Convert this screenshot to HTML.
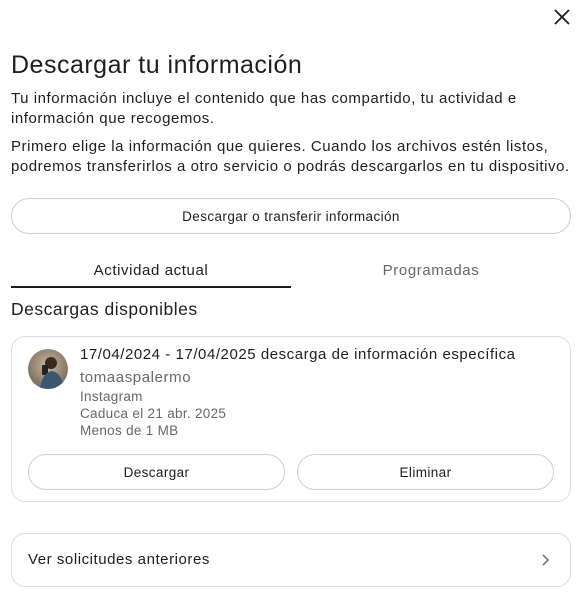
<!DOCTYPE html>
<html><head><meta charset="utf-8"><style>
*{margin:0;padding:0;box-sizing:border-box}
body{width:576px;height:593px;background:#fff;font-family:"Liberation Sans",sans-serif;color:#1c1e21;position:relative;overflow:hidden}
.a{position:absolute;white-space:nowrap}
.btn{position:absolute;border:1px solid #ced0d4;border-radius:20px;display:flex;align-items:center;justify-content:center;font-size:13.5px;letter-spacing:0.4px;color:#1c1e21}
.p{font-size:15px;letter-spacing:0.55px;line-height:20px;left:11px}
.g{color:#65676b}
</style></head><body>
<svg class="a" style="left:553px;top:8px" width="18" height="18" viewBox="0 0 18 18"><path d="M2 2L16 16M16 2L2 16" stroke="#1c1e21" stroke-width="1.8"/></svg>
<div class="a" style="left:11px;top:51px;font-size:25px;letter-spacing:0.5px;font-weight:500">Descargar tu información</div>
<div class="a p" style="top:89px">Tu información incluye el contenido que has compartido, tu actividad e<br>información que recogemos.</div>
<div class="a p" style="top:137px">Primero elige la información que quieres. Cuando los archivos estén listos,<br>podremos transferirlos a otro servicio o podrás descargarlos en tu dispositivo.</div>
<div class="btn" style="left:11px;top:198px;width:560px;height:36px">Descargar o transferir información</div>
<div class="a" style="left:11px;top:262px;width:280px;text-align:center;font-size:15px;letter-spacing:0.6px">Actividad actual</div>
<div class="a" style="left:11px;top:286px;width:280px;height:2px;background:#1c1e21"></div>
<div class="a g" style="left:291px;top:262px;width:280px;text-align:center;font-size:15px;letter-spacing:0.6px">Programadas</div>
<div class="a" style="left:11px;top:299px;font-size:17.5px;letter-spacing:0.5px;font-weight:500">Descargas disponibles</div>
<div class="a" style="left:11px;top:336px;width:560px;height:166px;border:1px solid #dadde1;border-radius:14px"></div>
<div class="a" style="left:28px;top:349px;width:40px;height:40px;border-radius:50%;background:radial-gradient(circle at 50% 40%,#c9b8a0,#8a7a68 60%,#4a5a70);overflow:hidden">
<svg width="40" height="40"><circle cx="23" cy="14" r="6" fill="#3a2a20"/><rect x="14" y="16" width="6" height="10" rx="1" fill="#222"/><path d="M12 40 Q14 24 24 22 Q34 24 36 40Z" fill="#3d5670"/></svg></div>
<div class="a" style="left:80px;top:346px;font-size:15px;letter-spacing:0.55px">17/04/2024 - 17/04/2025 descarga de información específica</div>
<div class="a g" style="left:80px;top:369px;font-size:15px;letter-spacing:0.6px">tomaaspalermo</div>
<div class="a g" style="left:80px;top:388px;font-size:13.5px;letter-spacing:0.3px;line-height:17px">Instagram<br>Caduca el 21 abr. 2025<br>Menos de 1 MB</div>
<div class="btn" style="left:28px;top:454px;width:257px;height:36px">Descargar</div>
<div class="btn" style="left:297px;top:454px;width:257px;height:36px">Eliminar</div>
<div class="a" style="left:11px;top:533px;width:560px;height:54px;border:1px solid #dadde1;border-radius:14px"></div>
<div class="a" style="left:28px;top:551px;font-size:15px;letter-spacing:0.55px">Ver solicitudes anteriores</div>
<svg class="a" style="left:540px;top:554px" width="10" height="12" viewBox="0 0 10 12"><path d="M3 1L8 6L3 11" fill="none" stroke="#65676b" stroke-width="1.5"/></svg>
</body></html>
